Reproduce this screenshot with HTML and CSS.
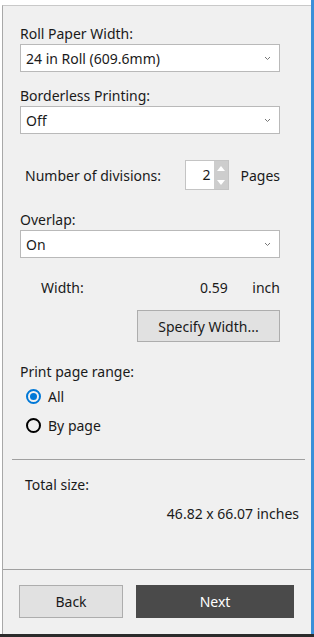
FILE: index.html
```html
<!DOCTYPE html>
<html>
<head>
  <title>Roll Printing</title>
  <link rel="stylesheet" href="styles.css">
</head>
<body>
  <div class="window">
    <div class="panel">
      <div class="content">
        <div class="label">Roll Paper Width:</div>
        <div class="select">
          <span>24 in Roll (609.6mm)</span>
          <svg class="chev" width="7" height="5" viewBox="0 0 7 5"><polyline points="1,1 3.5,3.5 6,1" fill="none" stroke="#777" stroke-width="1"/></svg>
        </div>

        <div class="label second">Borderless Printing:</div>
        <div class="select">
          <span>Off</span>
          <svg class="chev" width="7" height="5" viewBox="0 0 7 5"><polyline points="1,1 3.5,3.5 6,1" fill="none" stroke="#777" stroke-width="1"/></svg>
        </div>

        <div class="divisions">
          <span class="div-label">Number of divisions:</span>
          <div class="spinner">
            <span class="spin-value">2</span>
            <div class="spin-btns">
              <div class="spin-btn"><svg width="8" height="5" viewBox="0 0 8 5"><polygon points="0,5 4,0 8,5" fill="#fff"/></svg></div>
              <div class="spin-btn"><svg width="8" height="5" viewBox="0 0 8 5"><polygon points="0,0 8,0 4,5" fill="#fff"/></svg></div>
            </div>
          </div>
          <span class="pages">Pages</span>
        </div>

        <div class="label">Overlap:</div>
        <div class="select">
          <span>On</span>
          <svg class="chev" width="7" height="5" viewBox="0 0 7 5"><polyline points="1,1 3.5,3.5 6,1" fill="none" stroke="#777" stroke-width="1"/></svg>
        </div>

        <div class="width-row">
          <span class="w-label">Width:</span>
          <span class="w-value">0.59</span>
          <span class="w-unit">inch</span>
        </div>
        <div class="specify-wrap">
          <button class="btn specify">Specify Width...</button>
        </div>

        <div class="label range">Print page range:</div>
        <div class="radio checked"><span class="dot"></span>All</div>
        <div class="radio"><span class="dot"></span>By page</div>
      </div>

      <div class="divider"></div>

      <div class="total">
        <div class="total-label">Total size:</div>
        <div class="total-value">46.82 x 66.07 inches</div>
      </div>

      <div class="footer">
        <button class="btn back">Back</button>
        <button class="btn next">Next</button>
      </div>
    </div>
    <div class="taskbar"></div>
  </div>
</body>
</html>
```

FILE: styles.css
```css
body {
  margin: 0;
  background: #fff;
  font-family: "Noto Sans", "Open Sans", sans-serif;
  font-size: 14px;
  color: #1a1a1a;
}

.window {
  width: 314px;
  height: 637px;
  display: flex;
  flex-direction: column;
  padding-top: 5px;
  box-sizing: border-box;
  border-right: 3px solid #3a8fd9;
}

.panel {
  flex: 1;
  margin-left: 2px;
  background: #f0f0f0;
  border-top: 1px solid #c9c9c9;
  border-left: 1px solid #a8a8a8;
  display: flex;
  flex-direction: column;
}

.content {
  padding-left: 17px;
  width: 260px;
}

.label {
  height: 19px;
  line-height: 19px;
  margin-top: 18px;
  margin-bottom: 1px;
}

.label.second {
  margin-top: 14px;
}

.select {
  height: 28px;
  box-sizing: border-box;
  background: #fff;
  border: 1px solid #b9b9b9;
  display: flex;
  align-items: center;
  justify-content: space-between;
  padding: 0 8px 0 5px;
}

.divisions {
  display: flex;
  align-items: center;
  margin-top: 26px;
  margin-bottom: 20px;
}

.div-label {
  padding-left: 5px;
  width: 161px;
}

.spinner {
  width: 45px;
  height: 30px;
  box-sizing: border-box;
  background: #fff;
  border: 1px solid #c4c4c4;
  display: flex;
  justify-content: flex-end;
}

.spin-value {
  line-height: 28px;
  padding-right: 4px;
}

.spin-btns {
  width: 14px;
  display: flex;
  flex-direction: column;
  background: #cdcdcd;
}

.spin-btn {
  flex: 1;
  display: flex;
  align-items: center;
  justify-content: center;
}

.pages {
  margin-left: 11px;
}

.width-row {
  display: flex;
  margin-top: 20px;
  height: 19px;
  line-height: 19px;
}

.w-label {
  padding-left: 21px;
  width: 159px;
}

.w-value {
  width: 52px;
}

.w-unit {
  flex: 1;
  text-align: right;
}

.specify-wrap {
  display: flex;
  justify-content: flex-end;
  margin-top: 13px;
}

.btn {
  font-family: inherit;
  font-size: 14px;
  color: #1a1a1a;
  background: #e1e1e1;
  border: 1px solid #adadad;
  padding: 0;
  box-sizing: border-box;
}

.specify {
  width: 143px;
  height: 32px;
}

.label.range {
  margin-top: 20px;
}

.radio {
  display: flex;
  align-items: center;
  height: 29px;
  padding-left: 6px;
}

.radio .dot {
  width: 15px;
  height: 15px;
  box-sizing: border-box;
  border: 2px solid #000;
  border-radius: 50%;
  margin-right: 7px;
  display: flex;
  align-items: center;
  justify-content: center;
}

.radio.checked .dot {
  border-color: #0078d7;
}

.radio.checked .dot::after {
  content: "";
  width: 7px;
  height: 7px;
  border-radius: 50%;
  background: #0078d7;
}

.divider {
  height: 1px;
  background: #a0a0a0;
  margin: 19px 6px 0 9px;
}

.total {
  padding: 15px 12px 0 22px;
}

.total-label {
  line-height: 19px;
}

.total-value {
  text-align: right;
  line-height: 19px;
  margin-top: 10px;
}

.footer {
  margin-top: auto;
  border-top: 1px solid #a0a0a0;
  height: 65px;
  display: flex;
  align-items: flex-start;
  padding: 15px 0 0 16px;
  box-sizing: border-box;
  gap: 13px;
}

.back {
  width: 104px;
  height: 33px;
}

.next {
  width: 158px;
  height: 33px;
  background: #4a4a4a;
  border-color: #4a4a4a;
  color: #fff;
}

.taskbar {
  height: 3px;
  background: #2b2b2b;
  margin-right: -3px;
}
```
